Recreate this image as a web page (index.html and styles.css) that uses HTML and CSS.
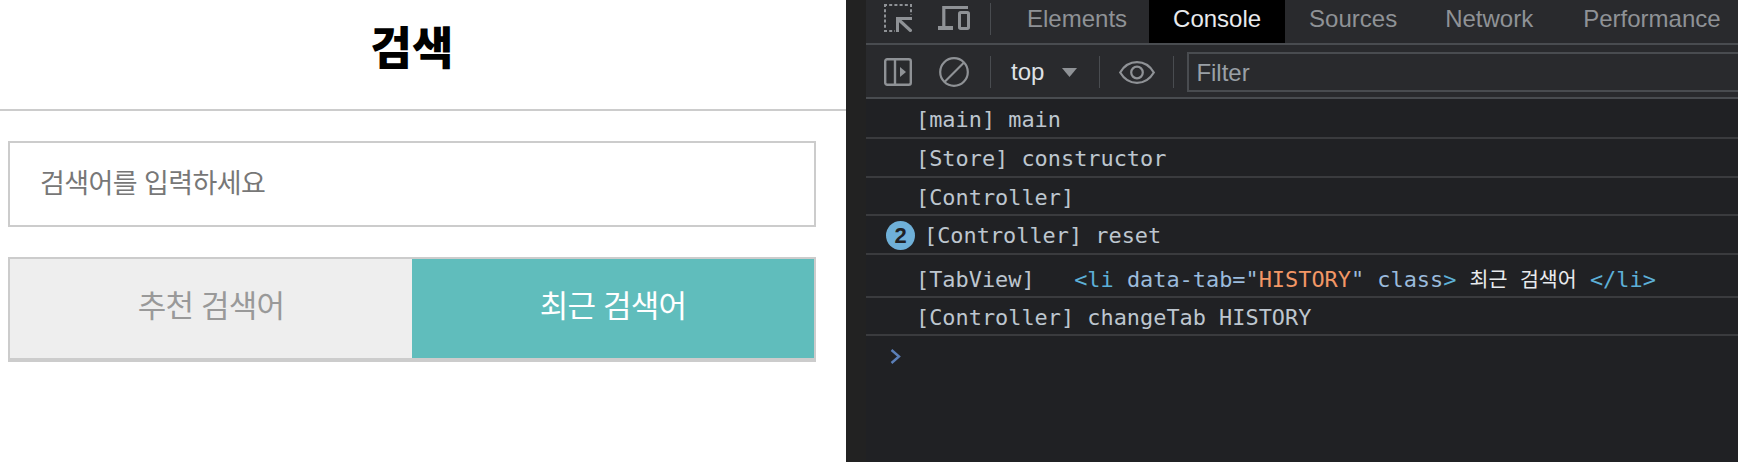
FILE: index.html
```html
<!DOCTYPE html>
<html lang="ko">
<head>
<meta charset="utf-8">
<title>검색</title>
<link rel="stylesheet" href="styles.css">
</head>
<body>
<main class="app">
  <header class="app-header"><h1 class="app-title">검색</h1></header>
  <div class="search-box"><span class="placeholder">검색어를 입력하세요</span></div>
  <ul class="search-tabs">
    <li class="search-tab">추천 검색어</li>
    <li class="search-tab active">최근 검색어</li>
  </ul>
</main>
<div class="gutter"></div>
<section class="devtools">
  <nav class="dt-bar tabs-bar">
    <svg class="ico ico-inspect" width="28" height="28" viewBox="0 0 28 28" fill="none" stroke="#8f9296">
      <path d="M0 1H28M1 0V28M0 27H11M27 0V11" stroke-width="2" stroke-dasharray="3 2.2"/>
      <path d="M12 14.5H28M13.5 13V28" stroke-width="3"/>
      <path d="M14 15L27.5 27.5" stroke-width="3.2"/>
    </svg>
    <svg class="ico ico-device" width="32" height="24" viewBox="0 0 32 24" fill="none" stroke="#8f9296">
      <path d="M30 1.5H5.8V21" stroke-width="3.2"/>
      <path d="M0 22H15" stroke-width="4"/>
      <rect x="21.5" y="6.5" width="9" height="16" rx="1.2" stroke-width="3"/>
    </svg>
    <span class="sep"></span>
    <a class="dt-tab first">Elements</a>
    <a class="dt-tab current">Console</a>
    <a class="dt-tab">Sources</a>
    <a class="dt-tab">Network</a>
    <a class="dt-tab last">Performance</a>
  </nav>
  <div class="dt-bar filter-bar">
    <svg class="ico ico-sidebar" width="28" height="28" viewBox="0 0 28 28" fill="none" stroke="#8f9296" stroke-width="2.4">
      <rect x="1.2" y="1.2" width="25.6" height="25.6" rx="2"/>
      <path d="M11 1.2V26.8"/>
      <path d="M16 9L22 14L16 19Z" fill="#8f9296" stroke="none"/>
    </svg>
    <svg class="ico ico-clear" width="30" height="30" viewBox="0 0 30 30" fill="none" stroke="#8f9296" stroke-width="2.2">
      <circle cx="15" cy="15" r="13.8"/>
      <path d="M5.5 25L25 5.5"/>
    </svg>
    <span class="sep"></span>
    <span class="context">top</span>
    <svg class="ico ico-caret" width="15" height="9" viewBox="0 0 15 9"><path d="M0 0H15L7.5 9Z" fill="#8f9296"/></svg>
    <span class="sep"></span>
    <svg class="ico ico-eye" width="36" height="23" viewBox="0 0 36 23" fill="none" stroke="#8f9296" stroke-width="2.2">
      <path d="M1.2 11.5C5 5 11 1.2 18 1.2S31 5 34.8 11.5C31 18 25 21.8 18 21.8S5 18 1.2 11.5Z"/>
      <circle cx="18" cy="11.5" r="5.8"/>
    </svg>
    <span class="sep"></span>
    <div class="filter">Filter</div>
  </div>
  <div class="log">
    <div class="row"><span class="msg">[main] main</span></div>
    <div class="row"><span class="msg">[Store] constructor</span></div>
    <div class="row"><span class="msg">[Controller]</span></div>
    <div class="row counted"><span class="badge">2</span><span class="msg">[Controller] reset</span></div>
    <div class="row tall"><span class="msg">[TabView]   <span class="tag">&lt;li</span> <span class="attr">data-tab="</span><span class="val">HISTORY</span><span class="attr">" class</span><span class="tag">&gt;</span> <span class="ko">최근 검색어</span> <span class="tag">&lt;/li&gt;</span></span></div>
    <div class="row"><span class="msg">[Controller] changeTab HISTORY</span></div>
    <div class="prompt">
      <svg width="11" height="15" viewBox="0 0 11 15" fill="none" stroke="#5b7fb8" stroke-width="2.4"><path d="M1.5 1L9 7.5L1.5 14"/></svg>
    </div>
  </div>
</section>
</body>
</html>
```
FILE: styles.css
```css
* { box-sizing: border-box; }
html, body { margin: 0; padding: 0; height: 100%; }
body {
  display: flex;
  width: 1738px;
  height: 462px;
  overflow: hidden;
  background: #fff;
  font-family: "Liberation Sans", "Noto Sans CJK KR", sans-serif;
}

/* App */
.app { width: 846px; flex: none; background: #fff; font-family: "Noto Sans CJK KR", sans-serif; }
.app-header {
  height: 111px;
  padding: 0 22px 18px 0;
  border-bottom: 2px solid #ccc;
  display: flex;
  align-items: center;
  justify-content: center;
}
.app-title { margin: 0; font-size: 45px; font-weight: 900; line-height: 1; color: #000; }
.search-box {
  width: 808px;
  height: 86px;
  margin: 30px 0 0 8px;
  padding: 0 0 6px 30px;
  border: 2px solid #ccc;
  display: flex;
  align-items: center;
}
.placeholder { font-size: 27px; color: #777; letter-spacing: -0.6px; }
.search-tabs {
  list-style: none;
  width: 808px;
  height: 105px;
  margin: 30px 0 0 8px;
  padding: 0;
  display: flex;
  border: 2px solid #ccc;
  border-bottom-width: 4px;
}
.search-tab {
  flex: 1;
  display: flex;
  align-items: center;
  justify-content: center;
  padding-bottom: 10px;
  background: #eee;
  color: #999;
  font-size: 31px;
  letter-spacing: -0.8px;
}
.search-tab.active { background: #60bdbc; color: #fff; }

/* Gutter */
.gutter { width: 20px; flex: none; background: #222; }

/* Devtools */
.devtools { flex: 1; min-width: 0; background: #202124; display: flex; flex-direction: column; }
.dt-bar { display: flex; align-items: center; background: #292a2d; border-bottom: 2px solid #494c50; }
.tabs-bar { height: 45px; padding-left: 18px; }
.filter-bar { height: 54px; padding: 2px 0 0 18px; }
.ico { flex: none; }
.tabs-bar .ico { margin-bottom: 7px; }
.tabs-bar .sep { margin-bottom: 6px; }
.ico-inspect { margin-right: 26px; }
.ico-device { margin-right: 20px; }
.sep { flex: none; width: 1px; height: 32px; background: #494c50; }
.tabs-bar .sep { margin-right: 10px; }
.dt-tab { flex: none; height: 43px; padding: 0 24px; font-size: 24px; line-height: 38px; color: #8f9296; }
.dt-tab.first { padding: 0 22px 0 26px; }
.dt-tab.last { padding-left: 26px; }
.dt-tab.current { background: #000; color: #e8eaed; }
.ico-clear { margin: 0 21px 0 27px; }
.context { margin: 0 0 0 20px; font-size: 24px; color: #dfe1e5; }
.ico-caret { margin: 0 22px 0 18px; }
.ico-eye { margin: 0 18px 0 19px; }
.filter {
  flex: 1;
  height: 40px;
  margin-left: 13px;
  padding-left: 7px;
  border: 2px solid #494c50;
  border-right: 0;
  font-size: 24px;
  line-height: 37px;
  color: #9aa0a6;
}
.log {
  flex: 1;
  display: grid;
  grid-template-rows: 40px 39px 38px 39px 43px 38px 1fr;
  font-family: "DejaVu Sans Mono", "Noto Sans CJK KR", monospace;
  font-size: 21.9px;
  color: #bdc6cf;
}
.row {
  display: flex;
  align-items: center;
  padding: 2px 0 0 50px;
  border-bottom: 2px solid #3a3b3e;
  white-space: pre;
}
.row.tall { padding-top: 4px; }
.row.counted { padding-left: 20px; }
.badge {
  flex: none;
  width: 29px;
  height: 29px;
  margin-right: 9px;
  border-radius: 50%;
  background: #6fb0d8;
  color: #202124;
  font-family: "Liberation Sans", sans-serif;
  font-weight: 700;
  font-size: 22px;
  line-height: 29px;
  text-align: center;
}
.tag { color: #5db0d7; }
.attr { color: #9bbbdc; }
.val { color: #f29766; }
.ko { color: #e8eaed; font-size: 20.6px; }
.prompt { padding: 13px 0 0 24px; }
.prompt svg { display: block; }
```
